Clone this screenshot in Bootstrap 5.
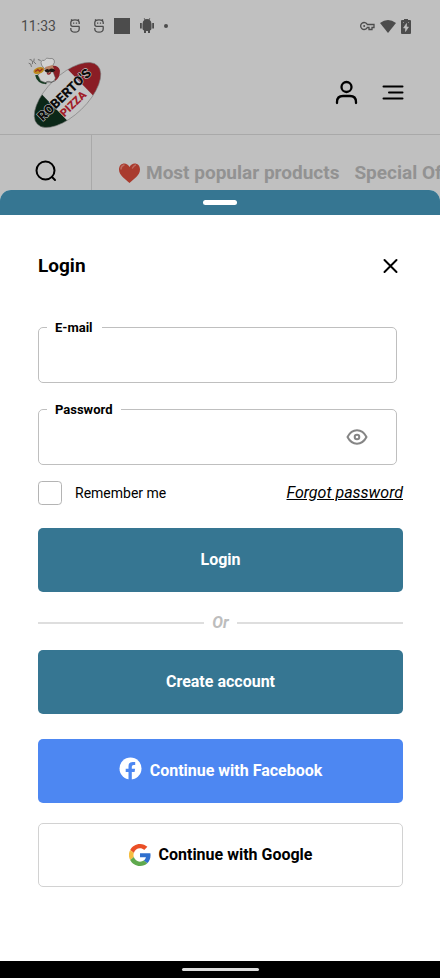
<!DOCTYPE html>
<html lang="en">
<head>
<meta charset="utf-8">
<meta name="viewport" content="width=device-width, initial-scale=1">
<title>Login</title>
<link rel="stylesheet" href="https://cdn.jsdelivr.net/npm/bootstrap@5.3.0/dist/css/bootstrap.min.css">
<style>
  body { font-family: Roboto, sans-serif; background: #c0c0c0; color: #000; font-size: 15px; }
  svg { display: block; flex: none; }
  .status-bar { height: 52px; padding: 0 29px 0 21px; color: #4c4c4c; font-size: 14px; }
  .status-left { gap: 10px; }
  .status-right { gap: 5px; }
  .brand-bar { height: 83px; padding: 0 36px 0 24px; border-bottom: 1px solid #a9a9a9; }
  .category-bar { height: 55px; }
  .search-cell { width: 92px; border-right: 1px solid #a9a9a9; }
  .category-list { font-size: 19px; font-weight: 700; line-height: 24px; padding: 26px 0 0 26px; gap: 15px; }
  .category-list a { color: #929292; text-decoration: none; gap: 5px; }
  .icon-btn { background: none; border: 0; padding: 0; color: #000; }
  .sheet { background: #fff; border-radius: 11px 11px 0 0; overflow: hidden; }
  .grab-area { height: 25px; background: #367692; }
  .grab-pill { width: 34px; height: 5px; border-radius: 3px; background: #fff; }
  .sheet-body { padding: 36px 37px 0 38px; }
  .sheet-head { margin-bottom: 36px; }
  .sheet-title { font-size: 19px; font-weight: 700; line-height: 30px; }
  .outlined { border: 1px solid #bfbfbf; border-radius: 5px; margin: 0 6px 16px 0; padding: 0 0 0 8px; height: 66px; }
  .outlined legend { float: none; width: auto; margin: 0; padding: 2px 9px 0 8px; font-size: 13px; font-weight: 700; line-height: 18px; }
  .outlined input { border: 0; outline: 0; background: none; height: 36px; min-width: 0; }
  .remember-row { margin: 14px 0 23px; }
  .remember-row label { font-size: 14px; padding-left: 13px; }
  .remember { width: 24px; height: 24px; margin: 0; border: 1px solid #b4b4b4; border-radius: 5px; }
  .forgot { font-size: 16px; font-style: italic; color: #000; }
  .action { height: 64px; border-radius: 5px; font-size: 16px; font-weight: 700; border: 0; }
  .action-teal, .action-teal:hover { background: #367692; color: #fff; }
  .action-blue, .action-blue:hover { background: #4d87f2; color: #fff; margin: 25px 0 20px; }
  .action-line, .action-line:hover { background: #fff; color: #000; border: 1px solid #d2d2d2; }
  .divider { color: #bdbdbd; font-size: 16px; font-weight: 700; font-style: italic; line-height: 24px; gap: 8px; margin: 19px 0 15px; }
  .divider-line { height: 2px; background: #dedede; }
  .home-bar { height: 17px; background: #000; }
  .home-pill { width: 77px; height: 3px; border-radius: 2px; background: #dedede; }
</style>
<script src="https://cdn.jsdelivr.net/npm/bootstrap@5.3.0/dist/js/bootstrap.bundle.min.js"></script>
</head>
<body class="d-flex flex-column min-vh-100">
<div class="status-bar d-flex align-items-center justify-content-between">
  <div class="status-left d-flex align-items-center">
    <span>11:33</span>
    <svg class="ms-1 me-1" width="10" height="14" viewBox="0 0 10 14" fill="none" stroke="currentColor" stroke-width="1.3"><path d="M9.300 7.300H2.500Q.8 7.300.8 5.500V3.500Q1 .8 5 .8T9.200 3.500V5M.8 9V10Q1 13.200 5 13.200T9.200 10V7.300M1.500 2.500V.3M8.500 2.500V.3"/><path d="M3 4.200h1.300M5.800 4.200h1.300"/></svg>
    <svg width="10" height="14" viewBox="0 0 10 14" fill="none" stroke="currentColor" stroke-width="1.3"><path d="M9.300 7.300H2.500Q.8 7.300.8 5.500V3.500Q1 .8 5 .8T9.200 3.500V5M.8 9V10Q1 13.200 5 13.200T9.200 10V7.300M1.500 2.500V.3M8.500 2.500V.3"/><path d="M3 4.200h1.300M5.800 4.200h1.300"/></svg>
    <svg width="16" height="16"><rect width="16" height="16" fill="currentColor"/></svg>
    <svg width="14" height="16" viewBox="0 0 14 16" fill="currentColor"><path d="M2.500 6Q2.500 3 4.500 1.700L3.700.5 4.200 0 5.200 1.200Q7 .6 8.800 1.200L9.800 0l.5.5-.8 1.200Q11.500 3 11.500 6v4.500Q11.500 12 10 12.500V15H8v-2H6v2H4v-2.500Q2.500 12 2.500 10.500zM0 5h1.800v5.500H0zM12.200 5H14v5.500h-1.800z"/></svg>
    <svg width="5" height="5"><circle cx="2" cy="2" r="2" fill="currentColor"/></svg>
  </div>
  <div class="status-right d-flex align-items-center">
    <svg width="15" height="10" viewBox="0 0 15 10" fill="none" stroke="currentColor" stroke-width="1.300"><path d="M7.300 3.500A3.500 3.500 0 1 0 7.300 6.500H9V8.500H12V6.500H14V3.500z"/><circle cx="4.200" cy="5" r="1" fill="currentColor" stroke="none"/></svg>
    <svg width="16" height="13" viewBox="0 0 16 13" fill="currentColor"><path d="M0 3Q8-3 16 3L8 13z"/></svg>
    <svg width="10" height="15" viewBox="0 0 10 15"><path d="M3 1V0h4v1h2q1 0 1 1v12q0 1-1 1H1q-1 0-1-1V2q0-1 1-1z" fill="currentColor"/><path d="M5.500 4.500 2.500 9h2v3.500L7.500 8h-2zM2 3.500h1M7 3.500h1" fill="#c0c0c0" stroke="#c0c0c0" stroke-width=".6"/></svg>
  </div>
</div>

<header class="brand-bar d-flex align-items-center justify-content-between">
  <a href="#" aria-label="Roberto's Pizza">
    <svg width="82" height="78" viewBox="0 0 82 78">
      <defs><clipPath id="oval"><ellipse rx="42" ry="20"/></clipPath></defs>
      <g transform="translate(43.500 41) rotate(-44)">
        <g clip-path="url(#oval)">
          <rect x="-42" y="-22" width="84" height="44" fill="#c4c4c4"/>
          <rect x="-42" y="-22" width="24" height="44" fill="#0b2717"/>
          <rect x="18" y="-22" width="24" height="44" fill="#8a1d25"/>
        </g>
        <ellipse rx="42" ry="20" fill="none" stroke="#777" stroke-width=".6"/>
        <text x="-2" y="2" text-anchor="middle" font-family="Roboto, sans-serif" font-size="13" font-weight="900" fill="#0c0c0c" stroke="#c4c4c4" stroke-width="1.200" paint-order="stroke">ROBERTO'S</text>
        <text x="-2" y="14" text-anchor="middle" font-family="Roboto, sans-serif" font-size="11" font-weight="900" fill="#a01c27">PIZZA</text>
      </g>
      <g transform="translate(1 0) scale(.92)">
        <path d="M11 23q2 9 12 10L28 20z" fill="#153b22"/>
        <path d="M24 14q12-4 14 4 0 8-5 11l-8-8z" fill="#8a1d25"/>
        <path d="M14 23Q20 16 25 14l5 4 3 8q-1 4-5 5-6 1-11-2z" fill="#cfcfcf" stroke="#555" stroke-width=".5"/>
        <path d="M18 12q-2-6 3-5 2-4 6-2 5-1 5 4l-2 4-9 3z" fill="#d2d2d2" stroke="#555" stroke-width=".6"/>
        <path d="M22 14l8-2 2 6-6 3-4-2z" fill="#b88266"/>
        <path d="M21 18q3-3 5-1 4-3 7 1-3 3-6 1-3 3-6-1" fill="#1c1513"/>
        <path d="M24 21q2 2 4-1" stroke="#8a1d25" stroke-width="1.500" fill="none"/>
        <ellipse cx="15" cy="18" rx="6" ry="3.500" transform="rotate(-18 15 18)" fill="#bd8a1e"/>
        <path d="M11 19l3-2 2 2 3-3" stroke="#9d2e1f" stroke-width="1.300" fill="none"/>
        <path d="M5 6q4 0 3 5M10 5q-2 4 2 6M4 10q3 0 3 4M14 6l3 1M28 31l5-2M21 32q4-4 8-1" stroke="#555" stroke-width=".8" fill="none"/>
      </g>
    </svg>
  </a>
  <div class="d-flex align-items-center gap-4">
    <button class="icon-btn" type="button" aria-label="Account"><svg width="23" height="26" viewBox="0 0 23 26" fill="none" stroke="currentColor" stroke-width="2.300" stroke-linecap="round"><circle cx="11.500" cy="7" r="5"/><path d="M2 23v-1q0-6 6-6h7q6 0 6 6v1"/></svg></button>
    <button class="icon-btn" type="button" aria-label="Menu"><svg width="22" height="18" viewBox="0 0 22 18" stroke="currentColor" stroke-width="2" stroke-linecap="round"><path d="M1.500 2.500h19M7 8.500h13.500M1.500 14.500h19"/></svg></button>
  </div>
</header>

<nav class="category-bar d-flex overflow-hidden" aria-label="Categories">
  <div class="search-cell flex-shrink-0 d-flex justify-content-center align-items-start pt-4">
    <button class="icon-btn" type="button" aria-label="Search"><svg width="24" height="24" viewBox="0 0 24 24" fill="none" stroke="currentColor" stroke-width="2" stroke-linecap="round"><circle cx="11.500" cy="11.500" r="9"/><path d="M18 18l3 3"/></svg></button>
  </div>
  <div class="category-list d-flex text-nowrap">
    <a class="d-flex" href="#"><svg width="23" height="24" viewBox="0 0 23 24"><path d="M11.500 22C8 18.500 1 14.500 1 8.500 1 1.500 9 .5 11.500 6 14 .5 22 1.500 22 8.500 22 14.500 15 18.500 11.500 22z" fill="#a93b2e"/><path d="M3 8q0-3 3-4M14.500 7q1-2 3-3" stroke="#bd6a5f" stroke-width="1.500" stroke-linecap="round" fill="none"/></svg>Most popular products</a>
    <a href="#">Special Offers</a>
  </div>
</nav>

<main class="sheet flex-grow-1">
  <div class="grab-area d-flex align-items-center justify-content-center"><div class="grab-pill"></div></div>
  <form class="sheet-body">
    <div class="sheet-head d-flex align-items-center justify-content-between">
      <h1 class="sheet-title m-0">Login</h1>
      <button class="icon-btn" type="button" aria-label="Close"><svg width="24" height="24" viewBox="0 0 24 24" stroke="currentColor" stroke-width="2" stroke-linecap="round"><path d="M5.500 6l12 12M17.500 6L5.500 18"/></svg></button>
    </div>
    <fieldset class="outlined">
      <legend><label for="email">E-mail</label></legend>
      <input class="w-100" id="email" type="email">
    </fieldset>
    <fieldset class="outlined">
      <legend><label for="password">Password</label></legend>
      <div class="d-flex align-items-center pe-4">
        <input class="flex-grow-1" id="password" type="password">
        <button class="icon-btn me-1" type="button" aria-label="Show password"><svg width="22" height="16" viewBox="0 0 22 16" fill="none" stroke="#858585" stroke-width="2"><path d="M1.500 8Q5 1.300 11 1.300T20.500 8Q17 14.700 11 14.700T1.500 8z" stroke-linejoin="round"/><circle cx="11" cy="8" r="2.300"/></svg></button>
      </div>
    </fieldset>
    <div class="remember-row d-flex align-items-center justify-content-between">
      <div class="d-flex align-items-center">
        <input class="form-check-input remember" type="checkbox" id="remember">
        <label for="remember">Remember me</label>
      </div>
      <a class="forgot" href="#">Forgot password</a>
    </div>
    <button class="btn action action-teal w-100" type="submit">Login</button>
    <div class="divider d-flex align-items-center"><div class="divider-line flex-fill"></div>Or<div class="divider-line flex-fill"></div></div>
    <button class="btn action action-teal w-100" type="button">Create account</button>
    <button class="btn action action-blue w-100 d-flex align-items-center justify-content-center gap-2" type="button">
      <svg width="23" height="28" viewBox="0 0 23 28"><circle cx="11.500" cy="11.500" r="11" fill="#fff"/><path d="M9.500 23V15H6.700v-3.300h2.800V9.300q0-4.200 4.200-4.200h2.500V8h-1.600q-1.800 0-1.800 1.700v2h3.300L15.600 15h-2.800v8z" fill="#4d87f2"/></svg>
      Continue with Facebook
    </button>
    <button class="btn action action-line w-100 d-flex align-items-center justify-content-center gap-2" type="button">
      <svg width="22" height="22" viewBox="0 0 48 48"><path fill="#ea4f26" d="M24 9.500c3.500 0 6.700 1.200 9.200 3.600l6.900-6.900C35.900 2.400 30.500 0 24 0 14.600 0 6.500 5.400 2.600 13.200l8 6.200C12.400 13.700 17.700 9.500 24 9.500z"/><path fill="#2f6fce" d="M47 24.500c0-1.600-.2-3.100-.4-4.500H24v9h12.900c-.6 3-2.300 5.500-4.800 7.200l7.700 6C44.400 38 47 31.800 47 24.500z"/><path fill="#f5bd40" d="M10.500 28.600a14.600 14.600 0 0 1 0-9.200l-8-6.200a24 24 0 0 0 0 21.600z"/><path fill="#5fa94e" d="M24 48c6.500 0 11.900-2.100 15.900-5.800l-7.700-6c-2.200 1.500-4.900 2.300-8.200 2.300-6.300 0-11.600-4.200-13.500-9.900l-8 6.200C6.500 42.600 14.600 48 24 48z"/></svg>
      Continue with Google
    </button>
  </form>
</main>
<footer class="home-bar d-flex align-items-center justify-content-center"><div class="home-pill"></div></footer>
</body>
</html>
